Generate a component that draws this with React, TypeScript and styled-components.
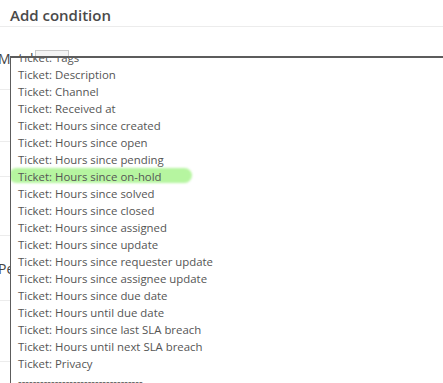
import { useEffect, useRef } from "react";
import styled, { createGlobalStyle } from "styled-components";

const GlobalStyle = createGlobalStyle`
  html, body {
    margin: 0;
    padding: 0;
    background: #ffffff;
    overflow: hidden;
  }
  body {
    font-family: "Open Sans", "Noto Sans", "Liberation Sans", sans-serif;
  }
`;

const Page = styled.div`
  position: relative;
  width: 443px;
  height: 383px;
  overflow: hidden;
  background: #ffffff;
`;

const Header = styled.div`
  height: 27px;
  padding: 3px 10px 0;
  box-sizing: border-box;
  display: flex;
  align-items: center;
  border-bottom: 1px solid #ececec;
`;

const Title = styled.h2`
  margin: 0;
  font-size: 15px;
  font-weight: 600;
  color: #4a4a4a;
`;

const Form = styled.div`
  display: flex;
  flex-direction: column;
`;

const Row = styled.div<{ $h: number }>`
  height: ${(p) => p.$h}px;
  display: flex;
  align-items: center;
  border-bottom: 1px solid #ececec;
  margin-left: -2px;
`;

const Label = styled.span`
  width: 37px;
  font-size: 14px;
  color: #444;
  white-space: nowrap;
`;

const TabButton = styled.span`
  width: 32px;
  height: 18px;
  border: 1px solid #c8c8c8;
  background: #f4f4f4;
  align-self: flex-start;
  margin-top: 23px;
`;

const Dropdown = styled.div`
  position: absolute;
  left: 10px;
  top: 56px;
  right: -20px;
  bottom: -20px;
  background: #ffffff;
  border-top: 2px solid #5c5c5c;
  border-left: 1px solid #5c5c5c;
`;

const List = styled.ul`
  list-style: none;
  margin: 0;
  padding: 0 0 0 7px;
  height: 100%;
  overflow: hidden;
`;

const Item = styled.li<{ $active?: boolean }>`
  position: relative;
  height: 17px;
  line-height: 17px;
  font-size: 11.4px;
  color: #555;
  white-space: nowrap;

  &::before {
    content: "";
    display: ${(p) => (p.$active ? "block" : "none")};
    position: absolute;
    left: -9px;
    top: 0;
    width: 183px;
    height: 15px;
    border-radius: 8px;
    background: #b6f5a0;
    filter: blur(1px);
    z-index: 0;
  }
`;

const ItemText = styled.span`
  position: relative;
`;

const options = [
  "Ticket: Status",
  "Ticket: Tags",
  "Ticket: Description",
  "Ticket: Channel",
  "Ticket: Received at",
  "Ticket: Hours since created",
  "Ticket: Hours since open",
  "Ticket: Hours since pending",
  "Ticket: Hours since on-hold",
  "Ticket: Hours since solved",
  "Ticket: Hours since closed",
  "Ticket: Hours since assigned",
  "Ticket: Hours since update",
  "Ticket: Hours since requester update",
  "Ticket: Hours since assignee update",
  "Ticket: Hours since due date",
  "Ticket: Hours until due date",
  "Ticket: Hours since last SLA breach",
  "Ticket: Hours until next SLA breach",
  "Ticket: Privacy",
  "----------------------------------",
  "User: Name",
];

export default function App() {
  const listRef = useRef<HTMLUListElement>(null);

  useEffect(() => {
    if (listRef.current) listRef.current.scrollTop = 17 + 9;
  }, []);

  return (
    <Page>
      <GlobalStyle />
      <Header>
        <Title>Add condition</Title>
      </Header>
      <Form>
        <Row $h={62}>
          <Label>Match</Label>
          <TabButton />
        </Row>
        <Row $h={51} />
        <Row $h={34} />
        <Row $h={58} />
        <Row $h={64}>
          <Label>Period</Label>
        </Row>
        <Row $h={60} />
      </Form>
      <Dropdown>
        <List ref={listRef}>
          {options.map((o) => (
            <Item key={o} $active={o === "Ticket: Hours since on-hold"}>
              <ItemText>{o}</ItemText>
            </Item>
          ))}
        </List>
      </Dropdown>
    </Page>
  );
}
